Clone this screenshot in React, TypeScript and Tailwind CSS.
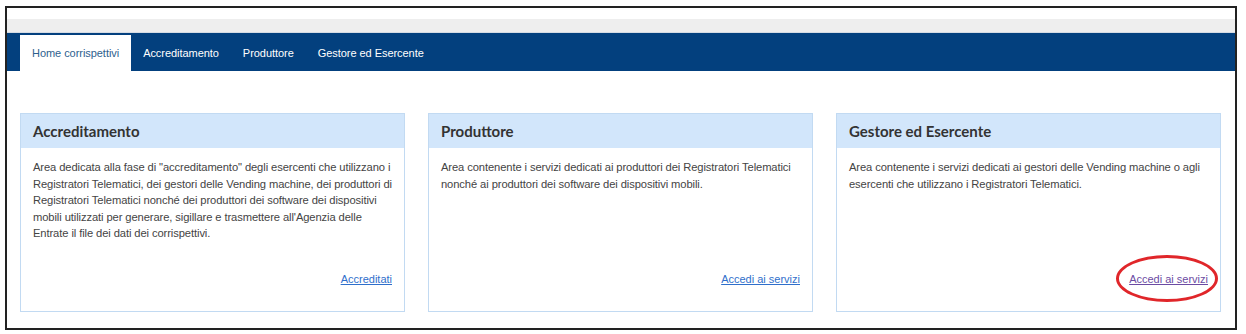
const tabs = ["Home corrispettivi", "Accreditamento", "Produttore", "Gestore ed Esercente"];

const cards = [
   {
      title: "Accreditamento",
      lines: [
         'Area dedicata alla fase di "accreditamento" degli esercenti che utilizzano i',
         "Registratori Telematici, dei gestori delle Vending machine, dei produttori di",
         "Registratori Telematici nonché dei produttori dei software dei dispositivi",
         "mobili utilizzati per generare, sigillare e trasmettere all'Agenzia delle",
         "Entrate il file dei dati dei corrispettivi.",
      ],
      link: "Accreditati",
      visited: false,
      marked: false,
   },
   {
      title: "Produttore",
      lines: [
         "Area contenente i servizi dedicati ai produttori dei Registratori Telematici",
         "nonché ai produttori dei software dei dispositivi mobili.",
      ],
      link: "Accedi ai servizi",
      visited: false,
      marked: false,
   },
   {
      title: "Gestore ed Esercente",
      lines: [
         "Area contenente i servizi dedicati ai gestori delle Vending machine o agli",
         "esercenti che utilizzano i Registratori Telematici.",
      ],
      link: "Accedi ai servizi",
      visited: true,
      marked: true,
   },
];

const App = () => {
   return (
      <div className="w-[1246px] h-[334px] bg-white pl-[5px] pt-[6px] font-['Liberation_Sans',Arial,sans-serif]">
         <div className="w-[1232px] h-[324px] border-2 border-[#222] flex flex-col">
            {/* Top strips */}
            <div className="h-[11px] bg-white" />
            <div className="h-[14px] bg-[#eeeeee] border-b border-[#d6dce4]" />

            {/* Nav */}
            <nav className="h-[38px] bg-[#03407e] flex items-end pl-[13px]">
               {tabs.map((tab, i) => (
                  <a
                     key={tab}
                     href="#"
                     className={
                        i === 0
                           ? "h-[36px] px-3 flex items-center bg-white text-[11px] tracking-[-0.05px] text-[#2e5f8e]"
                           : "h-[36px] px-3 flex items-center text-[11px] tracking-[-0.05px] text-white"
                     }
                  >
                     {tab}
                  </a>
               ))}
            </nav>

            {/* Cards */}
            <div className="grid grid-cols-3 gap-[23px] pl-[13px] pr-[14px] pt-[42px]">
               {cards.map((card) => (
                  <div
                     key={card.title}
                     className="h-[199px] border border-[#c2daf2] flex flex-col"
                  >
                     <div className="h-[34px] bg-[#d2e6fb] flex items-center px-3">
                        <h2 className="font-['Lato',sans-serif] font-bold text-[15px] text-[#333]">
                           {card.title}
                        </h2>
                     </div>
                     <p className="px-3 pt-[11px] text-[11.2px] tracking-[-0.1px] leading-[16.6px] text-[#444] whitespace-nowrap">
                        {card.lines.map((line, i) => (
                           <span key={i}>
                              {line}
                              {i < card.lines.length - 1 && <br />}
                           </span>
                        ))}
                     </p>
                     <div className="mt-auto pb-[21px] pr-3 flex justify-end">
                        <span className="relative">
                           <a
                              href="#"
                              className={
                                 card.visited
                                    ? "text-[11px] underline text-[#6b4ba3]"
                                    : "text-[11px] underline text-[#2f6fcb]"
                              }
                           >
                              {card.link}
                           </a>
                           {card.marked && (
                              <span className="absolute -left-[13px] -right-[10px] -top-[11px] -bottom-[12px] rounded-[50%] border-[3px] border-[#e0262a]" />
                           )}
                        </span>
                     </div>
                  </div>
               ))}
            </div>
         </div>
      </div>
   );
};

export default App;
